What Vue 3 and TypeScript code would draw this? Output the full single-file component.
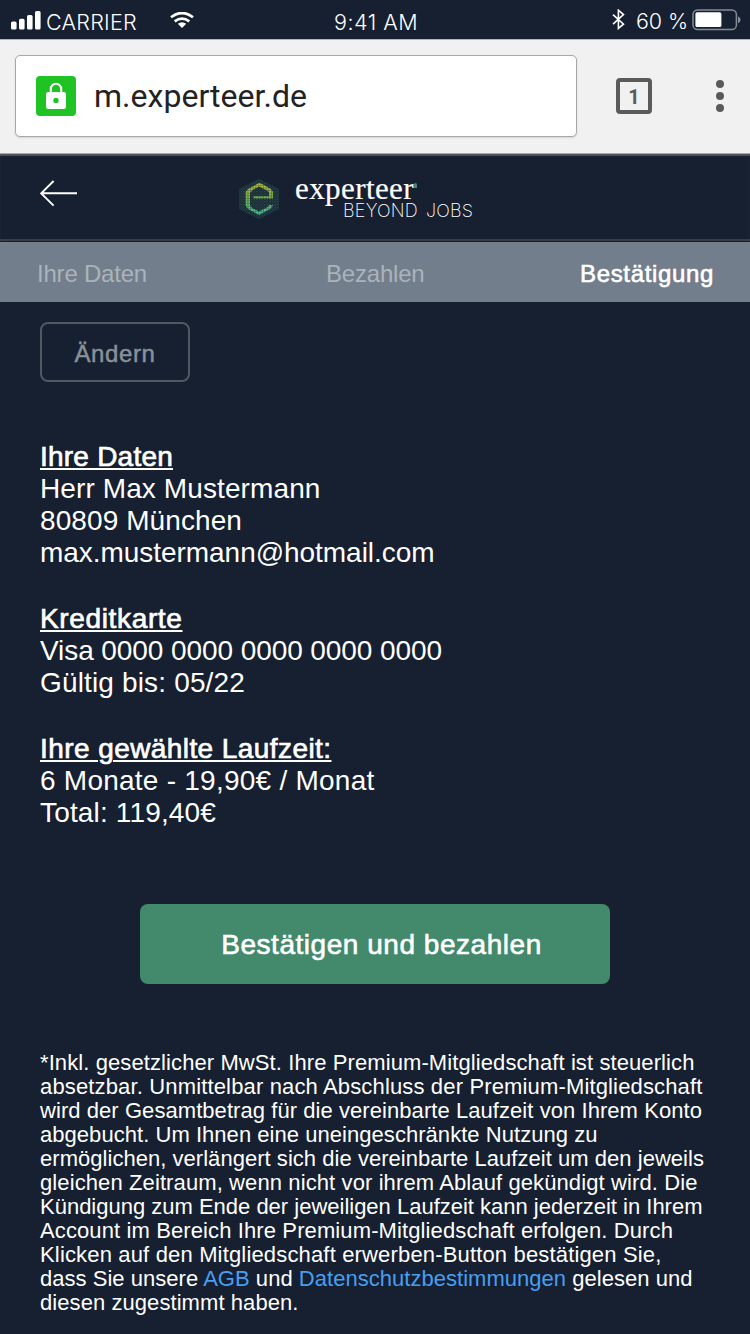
<script setup lang="ts">
import { nextTick } from 'vue'

interface FitLine { text: string; width: number }
interface Block { title: FitLine; lines: FitLine[] }

// Spaces out the letters of a line so that it takes exactly the given width.
const vFit = {
  mounted(el: HTMLElement, binding: { value: number }) {
    nextTick(() => {
      const count = (el.textContent ?? '').length
      const natural = el.getBoundingClientRect().width
      el.style.letterSpacing = `${(binding.value - natural) / count}px`
    })
  },
}

const blocks: Block[] = [
  {
    title: { text: 'Ihre Daten', width: 133 },
    lines: [
      { text: 'Herr Max Mustermann', width: 280.5 },
      { text: '80809 München', width: 202 },
      { text: 'max.mustermann@hotmail.com', width: 394.5 },
    ],
  },
  {
    title: { text: 'Kreditkarte', width: 142.5 },
    lines: [
      { text: 'Visa 0000 0000 0000 0000 0000', width: 402 },
      { text: 'Gültig bis: 05/22', width: 205 },
    ],
  },
  {
    title: { text: 'Ihre gewählte Laufzeit:', width: 291.5 },
    lines: [
      { text: '6 Monate - 19,90€ / Monat', width: 334.5 },
      { text: 'Total: 119,40€', width: 176 },
    ],
  },
]

const terms: FitLine[] = [
  { text: '*Inkl. gesetzlicher MwSt. Ihre Premium-Mitgliedschaft ist steuerlich', width: 654.5 },
  { text: 'absetzbar. Unmittelbar nach Abschluss der Premium-Mitgliedschaft', width: 662.5 },
  { text: 'wird der Gesamtbetrag für die vereinbarte Laufzeit von Ihrem Konto', width: 662 },
  { text: 'abgebucht. Um Ihnen eine uneingeschränkte Nutzung zu', width: 557.5 },
  { text: 'ermöglichen, verlängert sich die vereinbarte Laufzeit um den jeweils', width: 664 },
  { text: 'gleichen Zeitraum, wenn nicht vor ihrem Ablauf gekündigt wird. Die', width: 657.5 },
  { text: 'Kündigung zum Ende der jeweiligen Laufzeit kann jederzeit in Ihrem', width: 662.5 },
  { text: 'Account im Bereich Ihre Premium-Mitgliedschaft erfolgen. Durch', width: 633 },
  { text: 'Klicken auf den Mitgliedschaft erwerben-Button bestätigen Sie,', width: 621.5 },
]
</script>

<template>
  <div class="screen">
    <div class="status">
      <div class="status-left">
        <svg class="signal" width="30" height="19" viewBox="0 0 30 19">
          <g fill="#fff">
            <rect x="0" y="10.5" width="5.6" height="8" rx="1.6" />
            <rect x="8" y="7.8" width="5.6" height="10.7" rx="1.6" />
            <rect x="16" y="4" width="5.6" height="14.5" rx="1.6" />
            <rect x="24" y="0" width="5.6" height="18.5" rx="1.6" />
          </g>
        </svg>
        <span v-fit="91" class="carrier">CARRIER</span>
        <svg class="wifi" width="24" height="17" viewBox="0 0 24 17">
          <g fill="none" stroke="#fff" stroke-width="2.7">
            <path d="M1 5.2Q12-3.2 23 5.2" />
            <path d="M4.7 9.4Q12 3.8 19.3 9.4" />
          </g>
          <path d="M12 16 7.8 11.8Q12 8.6 16.2 11.8Z" fill="#fff" />
        </svg>
      </div>
      <span v-fit="84" class="time">9:41 AM</span>
      <div class="status-right">
        <svg class="bluetooth" width="13" height="21" viewBox="0 0 13 21">
          <path d="M1 5.6 11.5 15.2 6.4 19.4V1.2L11.5 5.6 1 15.2" fill="none" stroke="#fff" stroke-width="1.6" />
        </svg>
        <span v-fit="52" class="percent">60 %</span>
        <svg class="battery" width="50" height="22" viewBox="0 0 50 22">
          <rect x="1" y=".9" width="43.4" height="19.6" rx="4.6" fill="none" stroke="#858b95" stroke-width="1.5" />
          <rect x="3.4" y="3.3" width="26" height="14.7" rx="1.6" fill="#fff" />
          <path d="M46 7.2q2.6 1 2.6 3.5T46 14.2Z" fill="#858b95" />
        </svg>
      </div>
    </div>

    <div class="browser">
      <div class="address">
        <span class="lock">
          <svg width="40" height="40" viewBox="0 0 40 40">
            <path d="M14.8 17v-4a5.2 5.2 0 0 1 10.4 0v4" fill="none" stroke="#fff" stroke-width="2.1" />
            <rect x="10" y="16" width="20" height="17" rx="2.2" fill="#fff" />
            <circle cx="20" cy="24.4" r="2.7" fill="#1fc324" />
          </svg>
        </span>
        <span v-fit="213" class="url">m.experteer.de</span>
      </div>
      <div class="tabs">1</div>
      <div class="more"><i></i><i></i><i></i></div>
    </div>

    <header class="header">
      <svg class="back" width="38" height="27" viewBox="0 0 38 27">
        <path d="M13.6 1 1.2 13.3 13.6 25.6M1.2 13.3H37" fill="none" stroke="#fff" stroke-width="1.9" />
      </svg>
      <div class="logo">
        <svg class="mark" width="42" height="42" viewBox="0 0 42 42">
          <defs>
            <linearGradient id="glow" gradientUnits="userSpaceOnUse" x1="0" y1="5" x2="0" y2="37">
              <stop offset="0" stop-color="#c6d03a" />
              <stop offset=".5" stop-color="#78b552" />
              <stop offset="1" stop-color="#48d3a4" />
            </linearGradient>
            <pattern id="dots" width="2.6" height="2.6" patternUnits="userSpaceOnUse">
              <circle cx=".7" cy=".7" r=".7" fill="#3d7a68" />
              <circle cx="2" cy="2" r=".7" fill="#3d7a68" />
            </pattern>
            <pattern id="grid" width="2.6" height="2.6" patternUnits="userSpaceOnUse">
              <path d="M0 2.1H2.6M2.1 0V2.6" stroke="#162031" stroke-width=".7" opacity=".55" />
            </pattern>
          </defs>
          <path d="M21 1 41 11V31L21 41 1 31V11Z" fill="url(#dots)" opacity=".75" />
          <path d="M21 5 25 6.6 33 11 35 14V20.5H31V14.6L29 12.6 21 8.6 14.5 12 12 15V27L14 30 21 33.6 29 29.6 31 27H35L33 30.6 21 37 10 31 7.5 27.5V14L10 11Z" fill="url(#glow)" />
          <rect x="15.5" y="18.2" width="19" height="2.4" fill="#78b552" />
          <path d="M21 1 41 11V31L21 41 1 31V11Z" fill="url(#grid)" />
        </svg>
        <div class="words">
          <span class="name-row"><span v-fit="119" class="name">experteer</span><i class="spark"></i></span>
          <span class="claim"><span v-fit="75">BEYOND</span><span v-fit="47">JOBS</span></span>
        </div>
      </div>
    </header>

    <nav class="steps">
      <span v-fit="110">Ihre Daten</span>
      <span v-fit="98.5">Bezahlen</span>
      <span v-fit="134" class="current">Bestätigung</span>
    </nav>

    <main class="content">
      <button class="change"><span v-fit="81">Ändern</span></button>

      <div class="summary">
        <section v-for="block in blocks" :key="block.title.text" class="block">
          <h2><span v-fit="block.title.width">{{ block.title.text }}</span></h2>
          <p v-for="line in block.lines" :key="line.text"><span v-fit="line.width">{{ line.text }}</span></p>
        </section>
      </div>

      <button class="confirm"><span v-fit="320.5">Bestätigen und bezahlen</span></button>

      <div class="terms">
        <p v-for="line in terms" :key="line.text"><span v-fit="line.width">{{ line.text }}</span></p>
        <p><span v-fit="652.5">dass Sie unsere <a>AGB</a> und <a>Datenschutzbestimmungen</a> gelesen und</span></p>
        <p><span v-fit="258.5">diesen zugestimmt haben.</span></p>
      </div>
    </main>
  </div>
</template>

<style>
body { background: #162031; }
</style>

<style scoped>
.screen {
  width: 750px;
  height: 1334px;
  overflow: hidden;
  background: #162031;
  color: #fff;
  font-family: "Liberation Sans", Arial, sans-serif;
}
span, p { white-space: nowrap; }
p, h2 { margin: 0; }
.status {
  display: grid;
  grid-template-columns: 1fr auto 1fr;
  height: 39px;
  box-sizing: border-box;
  padding-left: 2px;
  font-family: Inter, sans-serif;
  font-size: 21.5px;
  font-weight: 350;
  line-height: 44px;
}
.status-left, .status-right { display: flex; align-items: flex-start; }
.signal { margin: 11px 0 0 9px; }
.carrier { margin-left: 5px; }
.wifi { margin: 12px 0 0 33px; }
.status-right { justify-content: flex-end; }
.bluetooth { margin-top: 9px; }
.percent { margin-left: 11px; line-height: 42px; }
.battery { margin: 9px 8px 0 4px; }
.browser {
  display: flex;
  align-items: flex-start;
  height: 115px;
  box-sizing: border-box;
  padding: 15px 0 0 15px;
  background: #f1f1f1;
  border-top: 1px solid #b5b6b8;
  border-bottom: 1px solid #aaa;
}
.address {
  display: flex;
  align-items: center;
  box-sizing: border-box;
  width: 562px;
  height: 82px;
  padding-left: 20px;
  background: #fff;
  border: 1px solid #a8a8a8;
  border-radius: 5px;
  box-shadow: 0 1px 2px rgba(0, 0, 0, .12);
}
.lock {
  width: 40px;
  height: 40px;
  border-radius: 4px;
  background: #1fc324;
}
.url {
  margin-left: 18px;
  color: #222;
  font: 32px/40px Roboto, sans-serif;
}
.tabs {
  box-sizing: border-box;
  width: 36px;
  height: 36px;
  margin: 23px 0 0 39px;
  border: 4px solid #5a5a5a;
  border-radius: 4px;
  color: #5a5a5a;
  font: 700 20px/30px Roboto, sans-serif;
  text-align: center;
}
.more { display: grid; gap: 4px; margin: 25px 0 0 64px; }
.more i { width: 8px; height: 8px; border-radius: 50%; background: #5a5a5a; }
.header {
  display: flex;
  height: 88px;
  box-sizing: border-box;
  padding-bottom: 1px;
  background: linear-gradient(#3a3c43, #3a3c43) 0 85px / 100% 2px no-repeat;
  box-shadow: inset 0 2px 1px #51545e;
}
.back { margin: 26px 0 0 40px; }
.logo { display: flex; margin-left: 160px; }
.mark { margin-top: 24px; }
.words { display: flex; flex-direction: column; margin: 19px 0 0 15px; }
.name-row { display: flex; height: 28px; }
.name { font: 31px/31px "Liberation Serif", serif; -webkit-text-stroke: .2px #fff; }
.spark { width: 3px; height: 5px; margin: 10px 0 0; border-radius: 2px 2px 0 0; background: #43896c; }
.claim {
  display: flex;
  gap: 8px;
  height: 18px;
  margin-left: 48px;
  font: 200 18px/19px Inter, sans-serif;
}
.steps {
  display: grid;
  grid-template-columns: 289px 1fr auto;
  height: 60px;
  padding: 0 36px 0 37px;
  background: #727e8b;
  font-size: 24px;
  line-height: 64px;
  color: #aab3bb;
}
.steps span { justify-self: start; }
.current { color: #fff; -webkit-text-stroke: .6px #fff; }
.content { padding: 20px 40px 0; }
button {
  display: flex;
  justify-content: center;
  box-sizing: border-box;
  padding: 0;
  font-family: inherit;
}
.change {
  width: 150px;
  height: 60px;
  border: 2px solid #505861;
  border-radius: 8px;
  background: none;
  color: #8a9099;
  font-size: 24px;
  line-height: 60px;
  -webkit-text-stroke: .5px #8a9099;
}
.summary {
  display: grid;
  gap: 34px;
  margin-top: 59px;
  font-size: 28px;
  line-height: 32px;
}
.block h2 {
  font-size: 28px;
  font-weight: 400;
  line-height: 32px;
  -webkit-text-stroke: .7px #fff;
}
.block h2 span {
  text-decoration: underline;
  text-decoration-thickness: 1.5px;
  text-underline-offset: 2px;
}
.confirm {
  width: 470px;
  height: 80px;
  margin: 75px 0 0 100px;
  padding-left: 13px;
  border: 0;
  border-radius: 8px;
  background: #43896c;
  color: #fff;
  font-size: 28px;
  line-height: 82px;
  -webkit-text-stroke: .6px #fff;
}
.terms {
  margin-top: 67px;
  font-size: 22px;
  line-height: 24px;
}
.terms a { color: #489ef0; }
</style>
